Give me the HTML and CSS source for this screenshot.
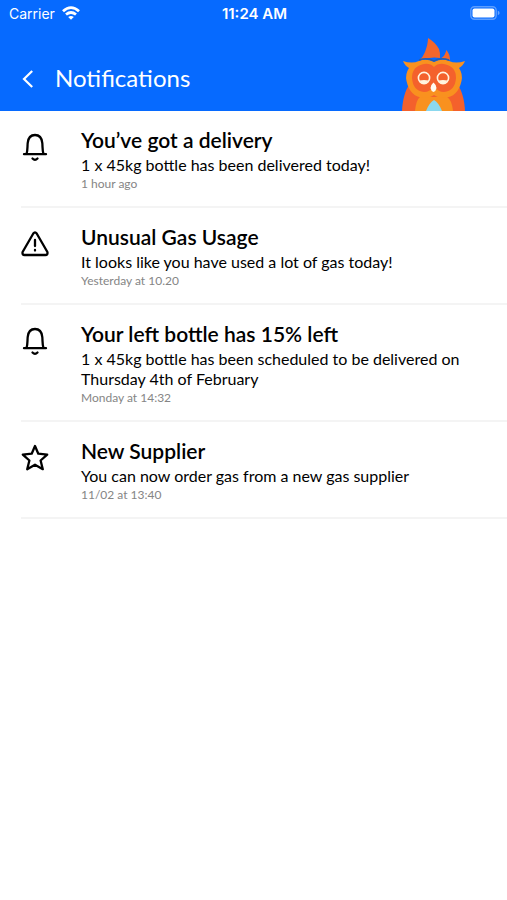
FILE: index.html
```html
<!DOCTYPE html>
<html lang="en">
<head>
    <meta charset="UTF-8">
    <meta name="viewport" content="width=device-width, initial-scale=1.0">
    <title>Notifications</title>
    <link rel="stylesheet" href="styles.css">
</head>
<body>
    <header class="header">
        <div class="status-bar">
            <div class="carrier">
                <span>Carrier</span>
                <svg class="wifi" viewBox="0 0 18 14" fill="none" stroke="#fff" stroke-width="2.8">
                    <path d="M1 5.2Q9 -2 17 5.2"/>
                    <path d="M4 8.5Q9 4.4 14 8.5"/>
                    <path d="M9 13.8L6.2 11Q9 8.8 11.8 11Z" fill="#fff" stroke="none"/>
                </svg>
            </div>
            <span class="clock">11:24 AM</span>
            <svg class="battery" viewBox="0 0 30 14">
                <rect x="0.8" y="0.8" width="25.4" height="12.4" rx="3.6" fill="none" stroke="#fff" stroke-opacity="0.35" stroke-width="1.4"/>
                <rect x="2.5" y="2.5" width="22" height="9" rx="2" fill="#fff"/>
                <path d="M27.8 4.8Q29.6 5.4 29.6 7T27.8 9.2Z" fill="#fff" fill-opacity="0.4"/>
            </svg>
        </div>
        <div class="nav-bar">
            <button class="back" type="button" aria-label="Back">
                <svg viewBox="0 0 12 18" fill="none" stroke="#fff" stroke-width="2.2">
                    <path d="M10.2 1L2 9L10.2 17"/>
                </svg>
            </button>
            <h1>Notifications</h1>
            <svg class="owl" viewBox="0 0 66 73">
                <!-- flame -->
                <path d="M18.5 22Q22 19 24 14Q27 6 27 0Q34 4 38 11Q39.5 15 39 20L40.5 20Q44.5 17 45.3 12Q49 16 49 22Q33 17 18.5 22Z" fill="#f4662b"/>
                <!-- body -->
                <path d="M1 73C1.500 62 4 53 8 47H57C61 53 63.500 62 64 73Z" fill="#f4612c"/>
                <path d="M14 73Q15 62 19 59H46Q51 62 52 73Z" fill="#f9911f"/>
                <path d="M25 73Q28 65 33 62Q38 65 41 73Z" fill="#8bd8ee"/>
                <!-- head -->
                <path d="M2 23Q11 26 18 23Q25 20 33 24Q41 20 48 23Q55 26 64 23Q62 28 58 30Q62 36 60.500 43Q57 59 43 60Q37 60 33 57Q29 60 23 60Q9 59 5.500 43Q4 36 8 30Q4 28 2 23Z" fill="#f9911f"/>
                <path d="M23 26Q29 25 33 29Q37 25 43 26Q55 28 55 40Q54 53 43 54Q37 54 33 48Q29 54 23 54Q12 53 11 40Q11 28 23 26Z" fill="#f4612c"/>
                <path d="M18 22Q26 19 33 23Q40 19 48 22" fill="none" stroke="#275caf" stroke-width="1.4"/>
                <!-- eyes and beak -->
                <g fill="none" stroke="#fff4df" stroke-width="1.600">
                    <circle cx="23" cy="40" r="5.6"/>
                    <circle cx="42" cy="40" r="5.6"/>
                </g>
                <path d="M18.5 42.500Q23 41.500 27.5 42.500Q26 45.5 23 45.5T18.5 42.500ZM37.5 42.500Q42 41.500 46.5 42.500Q45 45.5 42 45.5T37.5 42.500Z" fill="#fff4df"/>
                <path d="M32.500 44.500Q35.500 47 35.500 50Q35 53 32.500 54Q30 53 29.500 50Q29.500 47 32.500 44.500Z" fill="#fffaf0"/>
            </svg>
        </div>
    </header>

    <main>
        <ul class="notifications">
            <li class="notification">
                <svg class="icon" viewBox="0 0 28 28">
                    <path d="M3 21.2H25M5.5 21C6.8 17 6.3 14 6.7 10C7.2 5 9.8 2 14 2S20.8 5 21.3 10C21.7 14 21.2 17 22.5 21"/>
                    <path d="M11.500 25.500Q14 28 16.500 25.500"/>
                </svg>
                <div class="content">
                    <h2>You’ve got a delivery</h2>
                    <p>1 x 45kg bottle has been delivered today!</p>
                    <time>1 hour ago</time>
                </div>
            </li>
            <li class="notification">
                <svg class="icon" viewBox="0 0 28 28">
                    <path d="M12.3 3.5Q14 1.2 15.7 3.5L26.4 22Q27 25 24.4 25H3.6Q1 25 1.6 22Z"/>
                    <path d="M14 10V16M14 20V20.5"/>
                </svg>
                <div class="content">
                    <h2>Unusual Gas Usage</h2>
                    <p>It looks like you have used a lot of gas today!</p>
                    <time>Yesterday at 10.20</time>
                </div>
            </li>
            <li class="notification">
                <svg class="icon" viewBox="0 0 28 28">
                    <path d="M3 21.2H25M5.5 21C6.8 17 6.3 14 6.7 10C7.2 5 9.8 2 14 2S20.8 5 21.3 10C21.7 14 21.2 17 22.5 21"/>
                    <path d="M11.500 25.500Q14 28 16.500 25.500"/>
                </svg>
                <div class="content">
                    <h2>Your left bottle has 15% left</h2>
                    <p>1 x 45kg bottle has been scheduled to be delivered on Thursday 4th of February</p>
                    <time>Monday at 14:32</time>
                </div>
            </li>
            <li class="notification">
                <svg class="icon" viewBox="0 0 28 28">
                    <path d="M14 2L17.3 9.7L26.2 10.6L19.6 16.5L21.8 25.2L14 20.7L6.2 25.2L8.4 16.5L1.8 10.6L10.7 9.7Z"/>
                </svg>
                <div class="content">
                    <h2>New Supplier</h2>
                    <p>You can now order gas from a new gas supplier</p>
                    <time>11/02 at 13:40</time>
                </div>
            </li>
        </ul>
    </main>
</body>
</html>
```
FILE: styles.css
```css
* {
    box-sizing: border-box;
}

body {
    margin: 0;
    background: #fff;
    color: #000;
    font-family: Lato, sans-serif;
}

h1, h2, p {
    margin: 0;
}

.header {
    background: #066aff;
    color: #fff;
}

.status-bar {
    display: grid;
    grid-template-columns: 1fr auto 1fr;
    align-items: center;
    height: 26px;
    padding: 0 7px 0 9px;
    font-family: Inter, sans-serif;
    font-size: 14px;
}

.carrier {
    display: flex;
    align-items: center;
    gap: 7px;
}

.wifi {
    width: 18px;
    height: 14px;
}

.clock {
    font-size: 15px;
    font-weight: 600;
}

.battery {
    justify-self: end;
    width: 30px;
    height: 14px;
}

.nav-bar {
    display: flex;
    align-items: center;
    height: 85px;
    padding: 0 40px 0 16px;
}

.back {
    display: flex;
    justify-content: center;
    width: 24px;
    margin-top: 20px;
    padding: 0;
    border: none;
    background: none;
    cursor: pointer;
}

.back svg {
    width: 12px;
    height: 18px;
}

.nav-bar h1 {
    flex: 1;
    margin-top: 18px;
    padding-left: 15px;
    font-size: 24px;
    font-weight: 400;
    line-height: 32px;
}

.owl {
    align-self: flex-end;
    width: 66px;
    height: 73px;
}

.notifications {
    margin: 0;
    padding: 0 0 0 21px;
    list-style: none;
}

.notification {
    display: flex;
    align-items: flex-start;
    gap: 32px;
    padding: 14px 40px 13px 0;
    border-bottom: 2px solid #f4f4f4;
}

.icon {
    flex: none;
    width: 28px;
    height: 28px;
    margin-top: 8px;
    fill: none;
    stroke: #000;
    stroke-width: 2.3;
    stroke-linejoin: round;
    stroke-linecap: round;
}

.content h2 {
    font-size: 21px;
    font-weight: 600;
    line-height: 30px;
}

.content p {
    font-size: 16px;
    line-height: 20px;
}

.content time {
    display: block;
    color: #858585;
    font-size: 12px;
    line-height: 18px;
}
```
